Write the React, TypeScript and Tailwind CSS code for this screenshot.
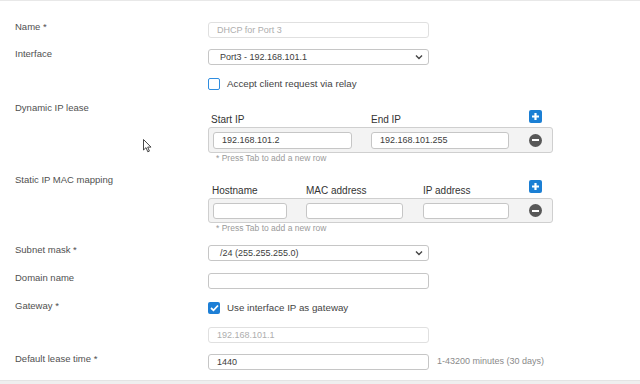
import React from 'react';

const Label = ({ children }: { children?: React.ReactNode }) => (
  <div className="w-[193px] shrink-0 -mt-[1.5px] text-[9.5px] leading-[12px] text-[#505050]">{children}</div>
);

const Field = ({ value, faded, className = 'w-[221px] h-[16px]' }: { value?: string; faded?: boolean; className?: string }) => (
  <div
    className={`${className} flex items-center pl-[8px] rounded-[3px] border bg-white text-[9px] leading-none ${
      faded ? 'border-[#e0e0e0] text-[#aeaeae]' : 'border-[#c6c6c6] text-[#3c3c3c]'
    }`}
  >
    {value}
  </div>
);

const Select = ({ value }: { value: string }) => (
  <div className="w-[221px] h-[16px] flex items-center justify-between pl-[11px] pr-[5px] rounded-[3px] border border-[#c6c6c6] bg-white text-[9px] leading-none text-[#3c3c3c]">
    <span>{value}</span>
    <svg width="8" height="6" viewBox="0 0 8 6">
      <path d="M1 1.5 L4 4.5 L7 1.5" fill="none" stroke="#444" strokeWidth="1.4" />
    </svg>
  </div>
);

const Checkbox = ({ checked, text }: { checked?: boolean; text: string }) => (
  <div className="flex items-center">
    {checked ? (
      <div className="w-[12px] h-[12px] rounded-[2px] bg-[#1d7fd6] flex items-center justify-center">
        <svg width="9" height="8" viewBox="0 0 9 8">
          <path d="M1 4 L3.5 6.3 L8 1.5" fill="none" stroke="#fff" strokeWidth="1.8" />
        </svg>
      </div>
    ) : (
      <div className="w-[12px] h-[12px] rounded-[2px] border-[1.5px] border-[#2f8de0] bg-white" />
    )}
    <span className="ml-[7px] text-[9.75px] leading-none text-[#444]">{text}</span>
  </div>
);

const PlusBtn = () => (
  <div className="w-[13px] h-[13px] rounded-[2px] bg-[#1b7fd4] flex items-center justify-center">
    <svg width="9" height="9" viewBox="0 0 9 9">
      <path d="M4.5 1 V8 M1 4.5 H8" stroke="#fff" strokeWidth="2.2" />
    </svg>
  </div>
);

const MinusBtn = () => (
  <div className="w-[13px] h-[13px] rounded-full bg-[#585858] flex items-center justify-center">
    <div className="w-[7px] h-[2px] bg-white" />
  </div>
);

const Hint = () => (
  <div className="pl-[8px] text-[8.5px] leading-[10px] text-[#9a9a9a]">* Press Tab to add a new row</div>
);

const Header = ({ children, className }: { children: React.ReactNode; className: string }) => (
  <div className={`${className} text-[10px] leading-[12px] text-[#333]`}>{children}</div>
);

export default function App() {
  return (
    <div className="relative w-[640px] h-[384px] flex flex-col bg-white border-t border-[#e8e8e8] overflow-hidden font-['Liberation_Sans',Arial,sans-serif]">
      <div className="flex-1 flex flex-col pt-[21px] pl-[15px]">
        <div className="flex">
          <Label>Name *</Label>
          <Field value="DHCP for Port 3" faded />
        </div>

        <div className="flex mt-[11px]">
          <Label>Interface</Label>
          <Select value="Port3 - 192.168.101.1" />
        </div>

        <div className="flex mt-[13px] h-[12px]">
          <Label />
          <Checkbox text="Accept client request via relay" />
        </div>

        {/* Dynamic IP lease */}
        <div className="flex mt-[13px]">
          <Label>Dynamic IP lease</Label>
          <div className="w-[345px] flex flex-col">
            <div className="h-[24px] flex items-start">
              <Header className="w-[163px] pl-[3px] pt-[11px]">Start IP</Header>
              <Header className="pt-[11px]">End IP</Header>
              <div className="ml-auto mr-[11px] mt-[7px]">
                <PlusBtn />
              </div>
            </div>
            <div className="h-[26px] flex items-center pl-[4px] rounded-[3px] border border-[#cfcfcf] bg-[#f3f3f3]">
              <Field value="192.168.101.2" className="w-[139px] h-[17px]" />
              <Field value="192.168.101.255" className="ml-[19px] w-[138px] h-[17px]" />
              <div className="ml-[20px]">
                <MinusBtn />
              </div>
            </div>
            <Hint />
          </div>
        </div>

        {/* Static IP MAC mapping */}
        <div className="flex mt-[12px]">
          <Label>Static IP MAC mapping</Label>
          <div className="w-[345px] flex flex-col">
            <div className="h-[23px] flex items-start">
              <Header className="w-[98px] pl-[4px] pt-[10px]">Hostname</Header>
              <Header className="w-[117px] pt-[10px]">MAC address</Header>
              <Header className="pt-[10px]">IP address</Header>
              <div className="ml-auto mr-[11px] mt-[5px]">
                <PlusBtn />
              </div>
            </div>
            <div className="h-[25px] flex items-center pl-[4px] rounded-[3px] border border-[#cfcfcf] bg-[#f3f3f3]">
              <Field className="w-[74px] h-[16px]" />
              <Field className="ml-[19px] w-[97px] h-[16px]" />
              <Field className="ml-[20px] w-[86px] h-[16px]" />
              <div className="ml-[20px]">
                <MinusBtn />
              </div>
            </div>
            <Hint />
          </div>
        </div>

        <div className="flex mt-[12px]">
          <Label>Subnet mask *</Label>
          <Select value="/24 (255.255.255.0)" />
        </div>

        <div className="flex mt-[12px]">
          <Label>Domain name</Label>
          <Field />
        </div>

        <div className="flex mt-[12px] h-[14px]">
          <Label>Gateway *</Label>
          <div className="mt-px">
            <Checkbox checked text="Use interface IP as gateway" />
          </div>
        </div>

        <div className="flex mt-[12px]">
          <Label />
          <Field value="192.168.101.1" faded />
        </div>

        <div className="flex mt-[11px] items-start">
          <Label>Default lease time *</Label>
          <Field value="1440" />
          <span className="ml-[8px] h-[16px] flex items-center text-[9px] text-[#8a8a8a]">1-43200 minutes (30 days)</span>
        </div>
      </div>

      <div className="h-[4px] bg-[#efefef] border-t border-[#e4e4e4]" />

      {/* mouse pointer */}
      <svg className="absolute left-[143px] top-[138px]" width="10" height="14" viewBox="0 0 10 14">
        <path d="M0.5 0.5 L0.5 11 L3 8.6 L4.8 12.8 L6.4 12.1 L4.7 8.1 L8 8.1 Z" fill="#fff" stroke="#333" strokeWidth="0.9" strokeLinejoin="round" />
      </svg>
    </div>
  );
}
